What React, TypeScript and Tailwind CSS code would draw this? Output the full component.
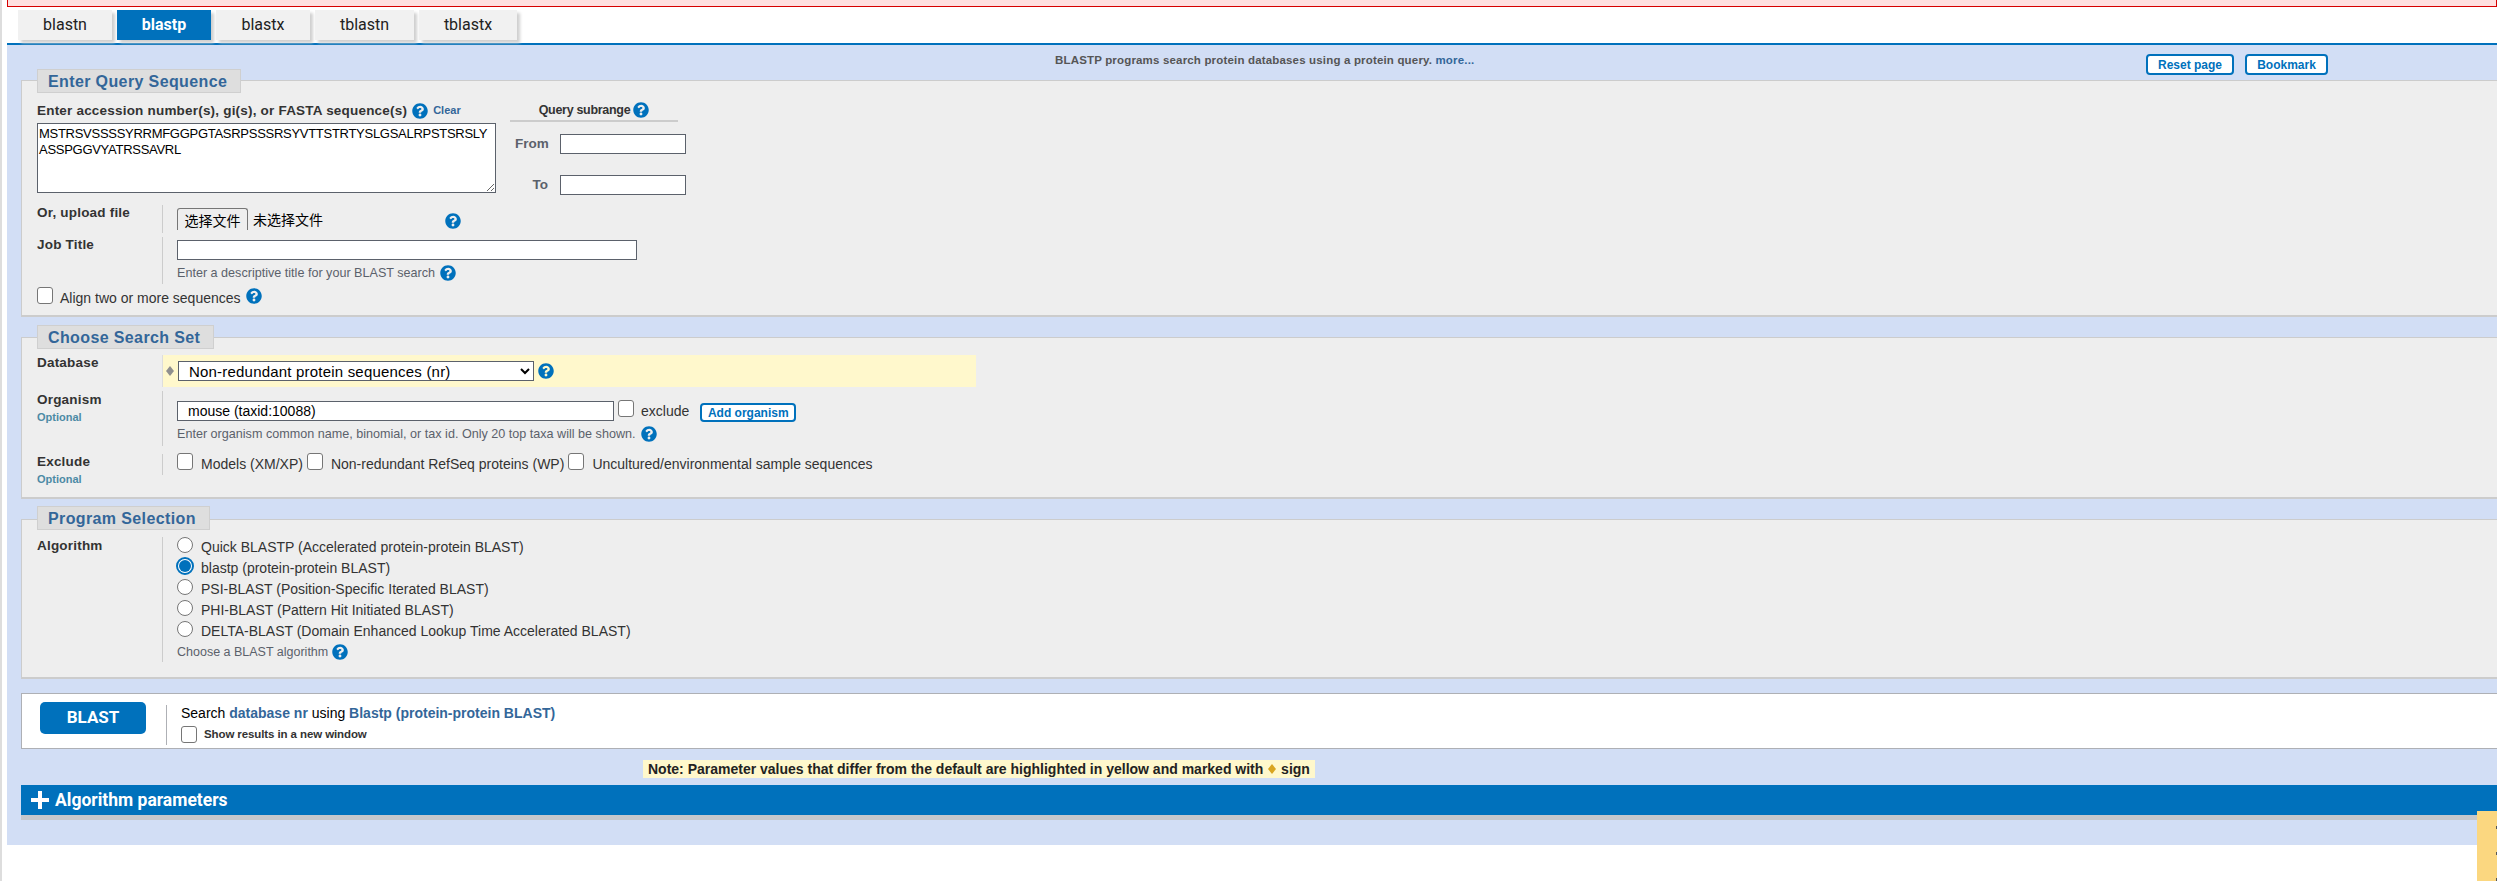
import React from "react";
import { FaQuestionCircle } from "react-icons/fa";

const Help = ({ className = "" }: { className?: string }) => (
  <FaQuestionCircle className={`text-[#0071bc] shrink-0 ${className}`} size={16} />
);

const Check = ({ className = "" }: { className?: string }) => (
  <span className={`inline-block shrink-0 w-[16px] h-[17px] border border-[#767676] rounded-[3px] bg-white ${className}`} />
);

const Radio = ({ on = false }: { on?: boolean }) =>
  on ? (
    <span className="shrink-0 w-[18px] h-[18px] -ml-px -mt-px rounded-full border-2 border-[#0071bc] bg-white flex items-center justify-center">
      <span className="w-[12px] h-[12px] rounded-full bg-[#0071bc]" />
    </span>
  ) : (
    <span className="shrink-0 w-[16px] h-[16px] rounded-full border border-[#767676] bg-white" />
  );

const Legend = ({ children, w, mt }: { children: React.ReactNode; w: string; mt: string }) => (
  <div className={`${mt} ml-[15px] h-[24px] ${w} bg-[#dedede] border border-[#cfcfcf] text-[#336699] font-bold text-[16px] tracking-[0.38px] leading-[23px] pl-[10px]`}>
    {children}
  </div>
);

const Label = ({ children, className = "" }: { children: React.ReactNode; className?: string }) => (
  <div className={`font-bold text-[13.5px] text-[#333] tracking-[0.2px] leading-[16px] ${className}`}>{children}</div>
);

const Optional = () => <div className="font-bold text-[11px] text-[#4c8aa5] leading-[14px] mt-[2px]">Optional</div>;

const Field = ({ className = "" }: { className?: string }) => (
  <div className={`bg-white border border-[#5b616b] ${className}`} />
);

const Diamond = ({ color, className = "" }: { color: string; className?: string }) => (
  <svg width="8" height="10" viewBox="0 0 8 10" className={`shrink-0 ${className}`}>
    <path d="M4 0l4 5-4 5-4-5z" fill={color} />
  </svg>
);

const tabs = [
  { t: "blastn", w: "w-[94px]" },
  { t: "blastp", w: "w-[94px]", on: true },
  { t: "blastx", w: "w-[94px]" },
  { t: "tblastn", w: "w-[99px]" },
  { t: "tblastx", w: "w-[98px]" },
];

const algos = [
  "Quick BLASTP (Accelerated protein-protein BLAST)",
  "blastp (protein-protein BLAST)",
  "PSI-BLAST (Position-Specific Iterated BLAST)",
  "PHI-BLAST (Pattern Hit Initiated BLAST)",
  "DELTA-BLAST (Domain Enhanced Lookup Time Accelerated BLAST)",
];

export default function App() {
  return (
    <div className="relative w-[2497px] h-[881px] overflow-hidden bg-white border-l-2 border-[#dddddd] pl-[5px] font-['Liberation_Sans',Arial,sans-serif] text-black">
      <div className="h-[7px] bg-[#ffe0e0] border-x border-b border-[#d60000]" />

      <div className="flex gap-[5px] mt-[3px] ml-[11px] h-[30px] font-['Roboto',sans-serif] text-[16px]">
        {tabs.map((x) => (
          <div
            key={x.t}
            className={`${x.w} flex items-center justify-center shadow-[3px_3px_3px_#cfcfcf] ${x.on ? "bg-[#0071bc] text-white font-bold" : "bg-[#f1f1f1] text-[#212121]"}`}
          >
            {x.t}
          </div>
        ))}
      </div>

      <div className="mt-[3px] h-[802px] border-t-2 border-[#0071bc] bg-[#d2def5]">
        <div className="h-[35px] relative">
          <div className="absolute left-[1048px] top-[7px] text-[11.5px] font-bold text-[#555] leading-[16px] tracking-[0.17px] whitespace-nowrap">
            BLASTP programs search protein databases using a protein query. <span className="text-[#336699]">more...</span>
          </div>
          <div className="absolute left-[2139px] top-[9px] w-[88px] h-[21px] bg-white border-2 border-[#0071bc] rounded-[4px] text-[#0071bc] font-bold text-[12px] flex items-center justify-center">Reset page</div>
          <div className="absolute left-[2238px] top-[9px] w-[83px] h-[21px] bg-white border-2 border-[#0071bc] rounded-[4px] text-[#0071bc] font-bold text-[12px] flex items-center justify-center">Bookmark</div>
        </div>

        {/* Enter Query Sequence */}
        <section className="ml-[14px] h-[237px] bg-[#eeeeee] border-t border-b-2 border-l border-[#cccccc]">
          <Legend w="w-[204px]" mt="-mt-[12px]">Enter Query Sequence</Legend>
          <div className="flex ml-[15px] mt-[9px]">
            <div className="w-[459px]">
              <div className="flex items-center gap-[5px] h-[17px]">
                <Label>Enter accession number(s), gi(s), or FASTA sequence(s)</Label>
                <Help />
                <span className="font-bold text-[11px] text-[#336699]">Clear</span>
              </div>
              <textarea
                readOnly
                className="block mt-[4px] w-[459px] h-[70px] bg-white border border-[#5b616b] pl-[1px] pt-[2px] text-[13px] tracking-[-0.28px] leading-[16px] outline-none"
                defaultValue={"MSTRSVSSSSYRRMFGGPGTASRPSSSRSYVTTSTRTYSLGSALRPSTSRSLY\nASSPGGVYATRSSAVRL"}
              />
            </div>
            <div className="ml-[14px] w-[176px]">
              <div className="w-[168px] h-[22px] border-b-2 border-[#cccccc] flex items-center justify-center gap-[3px] -mt-[2px] font-bold text-[12.5px] tracking-[-0.3px] text-[#333]">
                <span>Query subrange</span>
                <Help />
              </div>
              <div className="flex items-center mt-[12px] h-[20px]">
                <span className="w-[40px] pl-[5px] font-bold text-[13.5px] text-[#5b616b]">From</span>
                <Field className="ml-[10px] w-[126px] h-[20px]" />
              </div>
              <div className="flex items-center mt-[21px] h-[20px]">
                <span className="w-[40px] text-right font-bold text-[13.5px] text-[#5b616b] pr-[2px]">To</span>
                <Field className="ml-[10px] w-[126px] h-[20px]" />
              </div>
            </div>
          </div>

          <div className="flex ml-[15px] mt-[10px] h-[28px]">
            <Label className="w-[125px]">Or, upload file</Label>
            <div className="border-l border-[#cccccc] pl-[14px] flex">
              <div className="mt-[3px] w-[71px] h-[22px] border-x border-t border-[#767676] rounded-t-[3px] text-[14px] font-['Noto_Sans_CJK_SC',sans-serif] overflow-hidden flex justify-center pt-[1px] leading-[20px]">选择文件</div>
              <span className="ml-[5px] mt-[4px] text-[14px] font-['Noto_Sans_CJK_SC',sans-serif] leading-[20px]">未选择文件</span>
              <Help className="ml-[122px] mt-[8px]" />
            </div>
          </div>

          <div className="flex ml-[15px] mt-[4px] h-[47px]">
            <Label className="w-[125px]">Job Title</Label>
            <div className="border-l border-[#cccccc] pl-[14px]">
              <Field className="mt-[3px] w-[460px] h-[20px]" />
              <div className="flex items-center gap-[5px] mt-[4px] text-[12.6px] text-[#5b616b] leading-[18px]">
                Enter a descriptive title for your BLAST search <Help />
              </div>
            </div>
          </div>

          <div className="flex items-start ml-[15px] mt-[3px] h-[17px] text-[14px] text-[#333]">
            <Check />
            <span className="ml-[7px] mt-[2px] leading-[18px]">Align two or more sequences</span>
            <Help className="ml-[5px] mt-[1px]" />
          </div>
        </section>

        {/* Choose Search Set */}
        <section className="mt-[20px] ml-[14px] h-[162px] bg-[#eeeeee] border-t border-b-2 border-l border-[#cccccc]">
          <Legend w="w-[177px]" mt="-mt-[13px]">Choose Search Set</Legend>
          <div className="flex ml-[15px] mt-[6px] h-[32px]">
            <Label className="w-[125px]">Database</Label>
            <div className="w-[814px] bg-[#fff8cc] border-l border-[#dddddd] flex items-center">
              <Diamond color="#8f8f8f" className="ml-[3px] mr-[4px]" />
              <select className="w-[356px] h-[20px] bg-white border border-[#5b616b] pl-[6px] text-[15px] tracking-[0.2px] leading-[18px] outline-none">
                <option>Non-redundant protein sequences (nr)</option>
              </select>
              <Help className="ml-[4px]" />
            </div>
          </div>

          <div className="flex ml-[15px] mt-[4px] h-[55px]">
            <div className="w-[125px]">
              <Label className="pt-[1px]">Organism</Label>
              <Optional />
            </div>
            <div className="border-l border-[#cccccc] pl-[14px]">
              <div className="flex items-start mt-[10px]">
                <div className="w-[437px] h-[20px] bg-white border border-[#5b616b] pl-[10px] text-[14px] leading-[18px]">mouse (taxid:10088)</div>
                <Check className="ml-[4px] -mt-px" />
                <span className="ml-[7px] text-[14px] text-[#333] leading-[20px]">exclude</span>
                <div className="ml-[11px] mt-[2px] w-[96px] h-[19px] bg-white border-2 border-[#0071bc] rounded-[4px] text-[#0071bc] font-bold text-[12px] flex items-center justify-center">Add organism</div>
              </div>
              <div className="flex items-center gap-[4px] mt-[3px] text-[12.6px] text-[#5b616b] leading-[18px]">
                Enter organism common name, binomial, or tax id. Only 20 top taxa will be shown. <Help className="ml-[1px]" />
              </div>
            </div>
          </div>

          <div className="flex ml-[15px] mt-[8px]">
            <div className="w-[125px]">
              <Label>Exclude</Label>
              <Optional />
            </div>
            <div className="border-l border-[#cccccc] pl-[14px] h-[21px] flex items-start text-[14px] text-[#333] leading-[20px]">
              <Check className="-mt-px" />
              <span className="ml-[8px]">Models (XM/XP)</span>
              <Check className="ml-[4px] -mt-px" />
              <span className="ml-[8px]">Non-redundant RefSeq proteins (WP)</span>
              <Check className="ml-[4px] -mt-px" />
              <span className="ml-[8px]">Uncultured/environmental sample sequences</span>
            </div>
          </div>
        </section>

        {/* Program Selection */}
        <section className="mt-[20px] ml-[14px] h-[160px] bg-[#eeeeee] border-t border-b-2 border-l border-[#cccccc]">
          <Legend w="w-[173px]" mt="-mt-[14px]">Program Selection</Legend>
          <div className="flex ml-[15px] mt-[7px]">
            <Label className="w-[125px] pt-[1px]">Algorithm</Label>
            <div className="border-l border-[#cccccc] pl-[14px] h-[125px]">
              {algos.map((a, i) => (
                <div key={a} className="flex items-start h-[21px] text-[14px] leading-[21px] text-[#333]">
                  <Radio on={i === 1} />
                  <span className={i === 1 ? "ml-[7px]" : "ml-[8px]"}>{a}</span>
                </div>
              ))}
              <div className="flex items-center gap-[4px] h-[20px] text-[12.5px] text-[#5b616b]">
                Choose a BLAST algorithm <Help />
              </div>
            </div>
          </div>
        </section>

        {/* BLAST */}
        <div className="mt-[14px] ml-[14px] h-[56px] bg-white border-y border-l border-[#aeb0b5] flex">
          <div className="ml-[18px] mt-[8px] w-[106px] h-[32px] bg-[#0071bc] rounded-[5px] text-white font-bold text-[17px] flex items-center justify-center font-['Roboto',sans-serif]">BLAST</div>
          <div className="ml-[20px] mt-[11px] h-[40px] border-l border-[#aeb0b5] pl-[14px]">
            <div className="text-[14px] leading-[18px] -mt-[1px] whitespace-nowrap">
              Search <span className="font-bold text-[#336699]">database nr</span> using <span className="font-bold text-[#336699]">Blastp (protein-protein BLAST)</span>
            </div>
            <div className="flex items-center mt-[3px] text-[11.5px] font-bold text-[#333] tracking-[-0.1px]">
              <Check />
              <span className="ml-[7px] mt-[1px]">Show results in a new window</span>
            </div>
          </div>
        </div>

        <div className="flex mt-[11px] ml-[636px] h-[18px]">
          <div className="h-[18px] flex items-center bg-[#fff8cc] px-[5px] font-bold text-[14px] text-[#222] leading-[18px] whitespace-nowrap">
            <span className="whitespace-pre">Note: Parameter values that differ from the default are highlighted in yellow and marked with </span>
            <Diamond color="#d9a520" className="mx-[1px]" />
            <span className="whitespace-pre"> sign</span>
          </div>
        </div>

        <div className="mt-[7px] ml-[14px] h-[30px] bg-[#0071bc] shadow-[0_5px_0_#c4c7cc] flex items-center pl-[10px] text-white font-bold text-[17.5px] font-['Roboto',sans-serif]">
          <svg width="18" height="18" viewBox="0 0 18 18" className="shrink-0"><path d="M7 0h4v7h7v4h-7v7H7v-7H0V7h7z" fill="#fff" /></svg>
          <span className="ml-[6px]">Algorithm parameters</span>
        </div>
      </div>

      <div className="absolute left-[2475px] top-[811px] w-[20px] h-[70px] bg-[#fbd780] flex flex-col items-end pt-[15px] gap-[23px]">
        <span className="w-[1px] h-[3px] bg-[#555]" />
        <span className="w-[1px] h-[3px] bg-[#555]" />
        <span className="w-[1px] h-[3px] bg-[#555]" />
      </div>
    </div>
  );
}
